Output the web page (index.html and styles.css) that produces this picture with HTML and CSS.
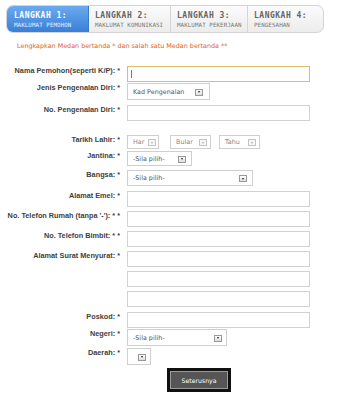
FILE: index.html
```html
<!DOCTYPE html>
<html>
<head>
<meta charset="utf-8">
<link rel="stylesheet" href="styles.css">
</head>
<body>
<div class="tabs">
  <div class="tab active w82"><div class="t1">LANGKAH 1:</div><div class="t2">MAKLUMAT PEMOHON</div></div>
  <div class="tab w82"><div class="t1">LANGKAH 2:</div><div class="t2">MAKLUMAT KOMUNIKASI</div></div>
  <div class="tab w77"><div class="t1">LANGKAH 3:</div><div class="t2">MAKLUMAT PEKERJAAN</div></div>
  <div class="tab w77 last"><div class="t1">LANGKAH 4:</div><div class="t2">PENGESAHAN</div></div>
</div>
<p class="note">Lengkapkan Medan bertanda * dan salah satu Medan bertanda **</p>
<div class="form">
  <div class="row h17"><div class="lbl">Nama Pemohon(seperti K/P): *</div><div class="input full focus"><span class="caret"></span></div></div>
  <div class="row h22"><div class="lbl">Jenis Pengenalan Diri: *</div><div class="select s-jenis"><span class="val">Kad Pengenalan</span><span class="btn"></span></div></div>
  <div class="row h30"><div class="lbl">No. Pengenalan Diri: *</div><div class="input full"></div></div>
  <div class="row h16"><div class="lbl">Tarikh Lahir: *</div>
    <div class="dates">
      <div class="select s-har dis"><span class="val">Har</span><span class="btn"></span></div>
      <div class="select s-bln dis"><span class="val">Bular</span><span class="btn"></span></div>
      <div class="select s-bln dis"><span class="val">Tahu</span><span class="btn"></span></div>
    </div>
  </div>
  <div class="row h19"><div class="lbl">Jantina: *</div><div class="select s-jantina"><span class="val">-Sila pilih-</span><span class="btn"></span></div></div>
  <div class="row h21"><div class="lbl">Bangsa: *</div><div class="select s-bangsa"><span class="val">-Sila pilih-</span><span class="btn"></span></div></div>
  <div class="row h20"><div class="lbl">Alamat Emel: *</div><div class="input full"></div></div>
  <div class="row h20"><div class="lbl">No. Telefon Rumah (tanpa '-'): * *</div><div class="input full"></div></div>
  <div class="row h20"><div class="lbl">No. Telefon Bimbit: * *</div><div class="input full"></div></div>
  <div class="row h20"><div class="lbl">Alamat Surat Menyurat: *</div><div class="input full"></div></div>
  <div class="row h20"><div class="lbl"></div><div class="input full"></div></div>
  <div class="row h21"><div class="lbl"></div><div class="input full"></div></div>
  <div class="row h17"><div class="lbl">Poskod: *</div><div class="input full"></div></div>
  <div class="row h19"><div class="lbl">Negeri: *</div><div class="select s-negeri"><span class="val">-Sila pilih-</span><span class="btn"></span></div></div>
  <div class="row h20"><div class="lbl">Daerah: *</div><div class="select s-daerah"><span class="btn"></span></div></div>
  <div class="actions"><div class="submit"><span>Seterusnya</span></div></div>
</div>
</body>
</html>
```

FILE: styles.css
```css
* { box-sizing: border-box; }
html, body { margin: 0; padding: 0; background: #fff; }
body { font-family: "DejaVu Sans", Verdana, sans-serif; width: 349px; height: 400px; overflow: hidden; }

.tabs {
  display: flex;
  margin: 5px 0 0 6px;
  width: 318px;
  height: 28px;
  border: 1px solid #d4d4d4;
  border-radius: 7px;
  background: linear-gradient(#fbfbfb, #ececec);
  overflow: hidden;
}
.tab {
  padding: 5px 0 0 6px;
  border-right: 1px solid #d6d6d6;
  font-family: "DejaVu Sans Mono", monospace;
  color: #666;
  white-space: nowrap;
  overflow: hidden;
}
.tab.last { border-right: none; }
.w82 { width: 82px; flex: none; }
.w77 { width: 77px; flex: none; }
.tab.active {
  background: linear-gradient(#6aaaf0, #3a7fd6);
  color: #fff;
  border-right: 1px solid #3a78c8;
  padding-left: 7px;
}
.t1 { font-size: 8px; font-weight: bold; letter-spacing: 0.5px; line-height: 10px; }
.t2 { font-size: 5.8px; letter-spacing: 0.1px; line-height: 9px; color: #777; }
.tab.active .t2 { color: #e6f0ff; }

.note {
  margin: 9px 0 0 17px;
  font-size: 6.4px;
  line-height: 8px;
  color: #e2622c;
}

.form { margin-top: 16px; }
.row { display: flex; align-items: flex-start; gap: 7px; }
.h16 { height: 16px; } .h17 { height: 17px; } .h19 { height: 19px; } .h20 { height: 20px; }
.h21 { height: 21px; } .h22 { height: 22px; } .h30 { height: 30px; }

.lbl {
  width: 120px;
  flex: none;
  text-align: right;
  font-family: "Liberation Sans", Arial, sans-serif;
  font-weight: bold;
  font-size: 7.3px;
  line-height: 8px;
  padding-top: 1px;
  color: #3e3e3e;
  white-space: nowrap;
}

.input {
  height: 16px;
  border: 1px solid #d2d2d2;
  background: #fff;
  position: relative;
}
.input.full { width: 183px; }
.input.focus { border-color: #dcbd6a; }
.caret {
  position: absolute;
  left: 3px; top: 3px;
  width: 1px; height: 8px;
  background: #777;
}

.select {
  position: relative;
  height: 17px;
  border: 1px solid #cfcfcf;
  background: #fff;
  display: flex;
  align-items: center;
  padding-left: 5px;
  font-size: 6.4px;
  color: #555;
}
.select .val { white-space: nowrap; }
.select .btn {
  position: absolute;
  top: 50%;
  margin-top: -3px;
  width: 8px; height: 7px;
  border: 1px solid #999;
  background: linear-gradient(#fff, #ddd);
}
.select .btn::after {
  content: "";
  position: absolute;
  left: 1.5px; top: 1.5px;
  border-left: 1.5px solid transparent;
  border-right: 1.5px solid transparent;
  border-top: 2px solid #222;
}
.s-jenis { width: 83px; } .s-jenis .btn { right: 6px; }
.s-jantina { width: 65px; height: 15px; } .s-jantina .btn { right: 5px; }
.s-bangsa { width: 126px; height: 16px; } .s-bangsa .btn { right: 5px; }
.s-negeri { width: 100px; } .s-negeri .btn { right: 4px; }
.s-daerah { width: 24px; } .s-daerah .btn { right: 4px; }

.dates { display: flex; gap: 11px; }
.dates .s-bln:last-child { margin-left: -3px; }
.select.dis { height: 14px; color: #888; }
.select.dis .btn { border-color: #c4c4c4; background: #f6f6f6; }
.select.dis .btn::after { border-top-color: #aaa; }
.s-har { width: 32px; } .s-har .btn { right: 2px; }
.s-bln { width: 41px; } .s-bln .btn { right: 3px; }

.actions { padding-left: 167px; margin-top: 0; }
.submit {
  width: 64px; height: 24px;
  background: #111;
  padding: 3px;
}
.submit span {
  display: flex;
  align-items: center;
  justify-content: center;
  height: 100%;
  background: #555;
  border: 1px solid #9a9a9a;
  color: #fff;
  font-size: 6.2px;
}
```
